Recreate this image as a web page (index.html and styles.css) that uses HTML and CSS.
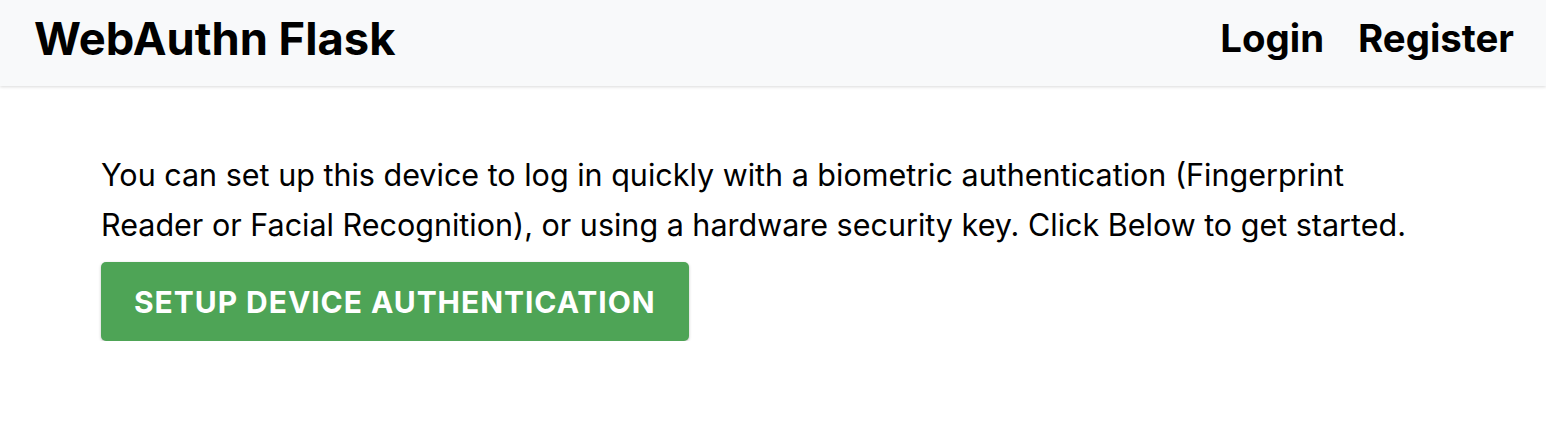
FILE: index.html
```html
<!DOCTYPE html>
<html lang="en">
<head>
<meta charset="utf-8">
<title>WebAuthn Flask</title>
<link rel="stylesheet" href="styles.css">
</head>
<body>
<nav class="navbar">
  <a class="brand" href="#">WebAuthn Flask</a>
  <div class="nav-links">
    <a class="nav-link" href="#">Login</a>
    <a class="nav-link" href="#">Register</a>
  </div>
</nav>
<main class="container">
  <p class="intro">You can set up this device to log in quickly with a biometric authentication (Fingerprint<br>Reader or Facial Recognition), or using a hardware security key. Click Below to get started.</p>
  <button class="btn-setup" type="button">SETUP DEVICE AUTHENTICATION</button>
</main>
</body>
</html>
```
FILE: styles.css
```css
* { box-sizing: border-box; }
html, body { margin: 0; padding: 0; }
body {
  font-family: Inter, "Noto Sans", sans-serif;
  background: #ffffff;
  color: #000000;
}
.navbar {
  height: 86px;
  background: #f8f9fa;
  box-shadow: 0 1px 3px rgba(0,0,0,0.15);
  display: flex;
  align-items: center;
  justify-content: space-between;
  padding: 0 32px 10px 34px;
}
.brand {
  font-size: 45.3px;
  font-weight: 700;
  color: #000;
  text-decoration: none;
}
.nav-links {
  display: flex;
  gap: 34px;
}
.nav-link {
  font-size: 38.4px;
  font-weight: 700;
  color: #000;
  text-decoration: none;
}
.container {
  padding: 64px 101px 0;
}
.intro {
  margin: 0;
  font-size: 30.5px;
  line-height: 50px;
}
.btn-setup {
  margin-top: 12px;
  height: 79px;
  padding: 0 33px;
  background: #4ea456;
  color: #ffffff;
  border: none;
  border-radius: 5px;
  box-shadow: 0 1px 3px rgba(0,0,0,0.25);
  font-family: Inter, sans-serif;
  font-size: 30px;
  font-weight: 700;
  letter-spacing: 0.95px;
}
```
